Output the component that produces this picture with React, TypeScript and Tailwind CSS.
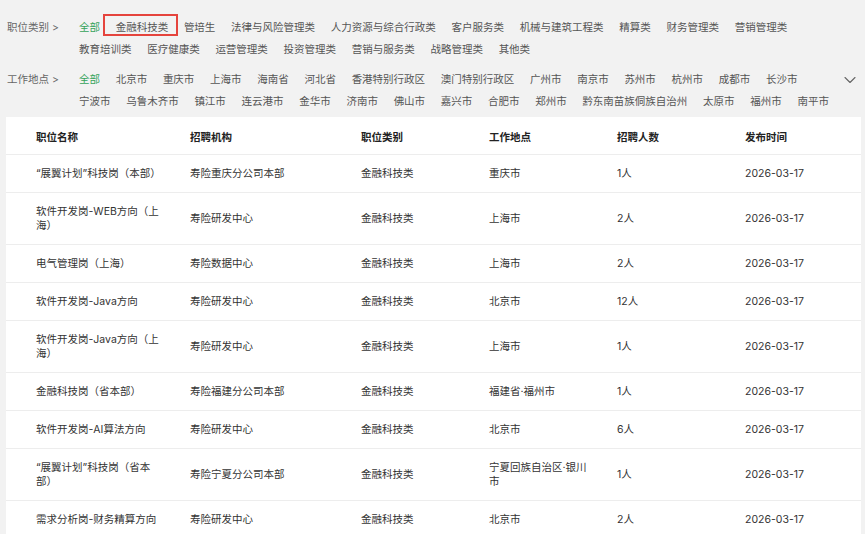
import { ChevronDown } from "lucide-react";

const categories = [
  "全部",
  "金融科技类",
  "管培生",
  "法律与风险管理类",
  "人力资源与综合行政类",
  "客户服务类",
  "机械与建筑工程类",
  "精算类",
  "财务管理类",
  "营销管理类",
  "教育培训类",
  "医疗健康类",
  "运营管理类",
  "投资管理类",
  "营销与服务类",
  "战略管理类",
  "其他类",
];

const locations = [
  "全部", "北京市", "重庆市", "上海市", "海南省", "河北省", "香港特别行政区", "澳门特别行政区",
  "广州市", "南京市", "苏州市", "杭州市", "成都市", "长沙市", "宁波市", "乌鲁木齐市", "镇江市",
  "连云港市", "金华市", "济南市", "佛山市", "嘉兴市", "合肥市", "郑州市", "黔东南苗族侗族自治州",
  "太原市", "福州市", "南平市",
];

const jobs = [
  ["“展翼计划”科技岗（本部）", "寿险重庆分公司本部", "金融科技类", "重庆市", "1人"],
  ["软件开发岗-WEB方向（上海）", "寿险研发中心", "金融科技类", "上海市", "2人"],
  ["电气管理岗（上海）", "寿险数据中心", "金融科技类", "上海市", "2人"],
  ["软件开发岗-Java方向", "寿险研发中心", "金融科技类", "北京市", "12人"],
  ["软件开发岗-Java方向（上海）", "寿险研发中心", "金融科技类", "上海市", "1人"],
  ["金融科技岗（省本部）", "寿险福建分公司本部", "金融科技类", "福建省·福州市", "1人"],
  ["软件开发岗-AI算法方向", "寿险研发中心", "金融科技类", "北京市", "6人"],
  ["“展翼计划”科技岗（省本部）", "寿险宁夏分公司本部", "金融科技类", "宁夏回族自治区·银川市", "1人"],
  ["需求分析岗-财务精算方向", "寿险研发中心", "金融科技类", "北京市", "2人"],
];

const headers = ["职位名称", "招聘机构", "职位类别", "工作地点", "招聘人数", "发布时间"];

function FilterRow({ label, items, marked, chevron }: { label: string; items: string[]; marked?: string; chevron?: boolean }) {
  return (
    <div className="flex items-start">
      <div className="w-[73px] shrink-0 pl-px leading-[22px] text-[#666]">{label}</div>
      <div className="flex w-[758px] flex-wrap gap-x-[15.7px] leading-[22px]">
        {items.map((it, i) => (
          <span key={it} className={`relative whitespace-nowrap ${i === 0 ? "text-[#35a35a]" : "text-[#555]"}`}>
            {it}
            {it === marked && (
              <span className="absolute -left-[13px] -right-[10px] -top-[3px] bottom-[3px] border-2 border-[#e5443d]" />
            )}
          </span>
        ))}
      </div>
      {chevron && (
        <div className="ml-[3px] flex h-[22px] items-center">
          <ChevronDown size={20} strokeWidth={1.3} className="text-[#666]" />
        </div>
      )}
    </div>
  );
}

export default function App() {
  return (
    <div
      className="min-h-screen overflow-hidden bg-[#f2f2f2] pl-[6px] pr-[4px] pt-[17px] text-[10.5px]"
      style={{ fontFamily: 'Inter, "Noto Sans CJK SC", sans-serif' }}
    >
      <FilterRow label="职位类别 >" items={categories} marked="金融科技类" />
      <div className="mt-2">
        <FilterRow label="工作地点 >" items={locations} chevron />
      </div>

      <div className="mt-[4px] bg-white">
        <table className="w-full table-fixed border-collapse text-[#333]">
          <colgroup>
            <col className="w-[154px]" />
            <col className="w-[171px]" />
            <col className="w-[128px]" />
            <col className="w-[128px]" />
            <col className="w-[128px]" />
            <col />
          </colgroup>
          <thead>
            <tr className="border-b border-[#ededed]">
              {headers.map((h) => (
                <th key={h} className="pb-[9.5px] pl-[30px] pt-[13.5px] text-left font-semibold leading-[14px] text-[#222]">
                  {h}
                </th>
              ))}
            </tr>
          </thead>
          <tbody>
            {jobs.map((j, i) => (
              <tr key={i} className="border-b border-[#ededed]">
                <td className="py-[11.5px] pl-[30px] align-middle leading-[14px]">{j[0]}</td>
                <td className="py-[11.5px] pl-[30px] align-middle leading-[14px]">{j[1]}</td>
                <td className="py-[11.5px] pl-[30px] align-middle leading-[14px]">{j[2]}</td>
                <td className="py-[11.5px] pl-[30px] align-middle leading-[14px]">
                  <div className="w-[100px]">{j[3]}</div>
                </td>
                <td className="py-[11.5px] pl-[30px] align-middle leading-[14px]">{j[4]}</td>
                <td className="py-[11.5px] pl-[30px] align-middle leading-[14px]">2026-03-17</td>
              </tr>
            ))}
          </tbody>
        </table>
      </div>
    </div>
  );
}
